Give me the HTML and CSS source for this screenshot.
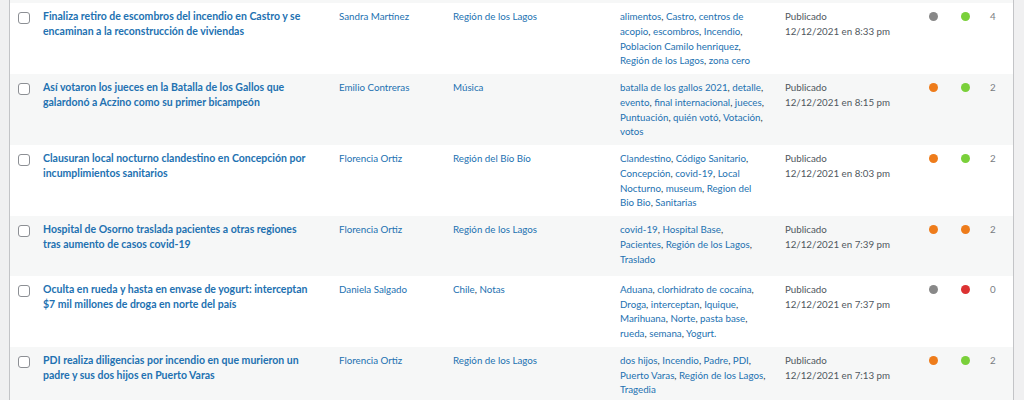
FILE: index.html
```html
<!DOCTYPE html>
<html lang="es">
<head>
<meta charset="utf-8">
<title>Entradas</title>
<link rel="stylesheet" href="styles.css">
</head>
<body>
<div class="wrap">
<table class="posts">
<colgroup>
<col class="c-cb"><col class="c-title"><col class="c-author"><col class="c-cat"><col class="c-tags"><col class="c-date"><col class="c-seo"><col class="c-read"><col class="c-com">
</colgroup>
<tbody>
<tr class="prev"><td colspan="9"></td></tr>
<tr>
<th class="check"><span class="cb"></span></th>
<td class="title"><strong><a href="#">Finaliza retiro de escombros del incendio en Castro y se encaminan a la reconstrucción de viviendas</a></strong><div class="row-actions">Editar | Edición rápida | Papelera | Ver</div></td>
<td><a href="#">Sandra Martínez</a></td>
<td><a href="#">Región de los Lagos</a></td>
<td class="tags"><a href="#">alimentos</a>, <a href="#">Castro</a>, <a href="#">centros de acopio</a>, <a href="#">escombros</a>, <a href="#">Incendio</a>, <a href="#">Poblacion Camilo henriquez</a>, <a href="#">Región de los Lagos</a>, <a href="#">zona cero</a></td>
<td class="date">Publicado<br>12/12/2021 en 8:33 pm</td>
<td><span class="dot gray"></span></td>
<td><span class="dot green"></span></td>
<td class="com">4</td>
</tr>
<tr>
<th class="check"><span class="cb"></span></th>
<td class="title"><strong><a href="#">Así votaron los jueces en la Batalla de los Gallos que galardonó a Aczino como su primer bicampeón</a></strong><div class="row-actions">Editar | Edición rápida | Papelera | Ver</div></td>
<td><a href="#">Emilio Contreras</a></td>
<td><a href="#">Música</a></td>
<td class="tags"><a href="#">batalla de los gallos 2021</a>, <a href="#">detalle</a>, <a href="#">evento</a>, <a href="#">final internacional</a>, <a href="#">jueces</a>, <a href="#">Puntuación</a>, <a href="#">quién votó</a>, <a href="#">Votación</a>, <a href="#">votos</a></td>
<td class="date">Publicado<br>12/12/2021 en 8:15 pm</td>
<td><span class="dot orange"></span></td>
<td><span class="dot green"></span></td>
<td class="com">2</td>
</tr>
<tr>
<th class="check"><span class="cb"></span></th>
<td class="title"><strong><a href="#">Clausuran local nocturno clandestino en Concepción por incumplimientos sanitarios</a></strong><div class="row-actions">Editar | Edición rápida | Papelera | Ver</div></td>
<td><a href="#">Florencia Ortiz</a></td>
<td><a href="#">Región del Bío Bío</a></td>
<td class="tags"><a href="#">Clandestino</a>, <a href="#">Código Sanitario</a>, <a href="#">Concepción</a>, <a href="#">covid-19</a>, <a href="#">Local Nocturno</a>, <a href="#">museum</a>, <a href="#">Region del Bio Bio</a>, <a href="#">Sanitarias</a></td>
<td class="date">Publicado<br>12/12/2021 en 8:03 pm</td>
<td><span class="dot orange"></span></td>
<td><span class="dot green"></span></td>
<td class="com">2</td>
</tr>
<tr>
<th class="check"><span class="cb"></span></th>
<td class="title"><strong><a href="#">Hospital de Osorno traslada pacientes a otras regiones tras aumento de casos covid-19</a></strong><div class="row-actions">Editar | Edición rápida | Papelera | Ver</div></td>
<td><a href="#">Florencia Ortiz</a></td>
<td><a href="#">Región de los Lagos</a></td>
<td class="tags"><a href="#">covid-19</a>, <a href="#">Hospital Base</a>, <a href="#">Pacientes</a>, <a href="#">Región de los Lagos</a>, <a href="#">Traslado</a></td>
<td class="date">Publicado<br>12/12/2021 en 7:39 pm</td>
<td><span class="dot orange"></span></td>
<td><span class="dot orange"></span></td>
<td class="com">2</td>
</tr>
<tr>
<th class="check"><span class="cb"></span></th>
<td class="title"><strong><a href="#">Oculta en rueda y hasta en envase de yogurt: interceptan $7 mil millones de droga en norte del país</a></strong><div class="row-actions">Editar | Edición rápida | Papelera | Ver</div></td>
<td><a href="#">Daniela Salgado</a></td>
<td><a href="#">Chile</a>, <a href="#">Notas</a></td>
<td class="tags"><a href="#">Aduana</a>, <a href="#">clorhidrato de cocaína</a>, <a href="#">Droga</a>, <a href="#">interceptan</a>, <a href="#">Iquique</a>, <a href="#">Marihuana</a>, <a href="#">Norte</a>, <a href="#">pasta base</a>, <a href="#">rueda</a>, <a href="#">semana</a>, <a href="#">Yogurt.</a></td>
<td class="date">Publicado<br>12/12/2021 en 7:37 pm</td>
<td><span class="dot gray"></span></td>
<td><span class="dot red"></span></td>
<td class="com">0</td>
</tr>
<tr>
<th class="check"><span class="cb"></span></th>
<td class="title"><strong><a href="#">PDI realiza diligencias por incendio en que murieron un padre y sus dos hijos en Puerto Varas</a></strong><div class="row-actions">Editar | Edición rápida | Papelera | Ver</div></td>
<td><a href="#">Florencia Ortiz</a></td>
<td><a href="#">Región de los Lagos</a></td>
<td class="tags"><a href="#">dos hijos</a>, <a href="#">Incendio</a>, <a href="#">Padre</a>, <a href="#">PDI</a>, <a href="#">Puerto Varas</a>, <a href="#">Región de los Lagos</a>, <a href="#">Tragedia</a></td>
<td class="date">Publicado<br>12/12/2021 en 7:13 pm</td>
<td><span class="dot orange"></span></td>
<td><span class="dot green"></span></td>
<td class="com">2</td>
</tr>
</tbody>
</table>
</div>
</body>
</html>
```

FILE: styles.css
```css
html, body {
  margin: 0;
  padding: 0;
  background: #f0f0f1;
  height: 100%;
  overflow: hidden;
}

.wrap {
  padding-left: 9px;
}

.posts {
  width: 1005px;
  table-layout: fixed;
  border-collapse: separate;
  border-spacing: 0;
  border: 1px solid #c3c4c7;
  border-top: 0;
  background: #fff;
  font-family: Lato, "Liberation Sans", sans-serif;
  font-size: 9.75px;
  line-height: 14.625px;
  color: #3c434a;
}

.c-cb { width: 25.5px; }
.c-title { width: 296px; }
.c-author { width: 114px; }
.c-cat { width: 167px; }
.c-tags { width: 165px; }
.c-date { width: 144px; }
.c-seo { width: 32px; }
.c-read { width: 29px; }
.c-com { width: auto; }

.posts tbody tr:nth-child(odd) {
  background: #f6f7f7;
}

.posts tr.prev td {
  height: 3px;
  padding: 0;
}

.posts td,
.posts th {
  padding: 6.25px 7.5px;
  vertical-align: top;
  text-align: left;
  font-weight: normal;
}

.posts td.title {
  padding-right: 17.5px;
}

.posts td.tags {
  padding-right: 11.5px;
}

.posts a {
  color: #2271b1;
  text-decoration: none;
}

.posts th.check {
  padding: 9px 0 0 2.25px;
}

.cb {
  display: block;
  width: 10px;
  height: 10px;
  margin-left: 6px;
  border: 1px solid #8c8f94;
  border-radius: 3px;
  background: #fff;
}

.title strong {
  display: block;
  font-size: 10.5px;
  font-weight: 700;
  margin-bottom: 2.1px;
}

.row-actions {
  padding-top: 1.5px;
  color: #a7aaad;
  visibility: hidden;
  white-space: nowrap;
  overflow: hidden;
}

.date {
  color: #50575e;
}

.dot {
  display: block;
  width: 9px;
  height: 9px;
  border-radius: 50%;
  margin-top: 3px;
}

.dot.gray { background: #888888; }
.dot.green { background: #7ad03a; }
.dot.orange { background: #ee7c1b; }
.dot.red { background: #dc3232; }

.com {
  color: #787c82;
}
```
